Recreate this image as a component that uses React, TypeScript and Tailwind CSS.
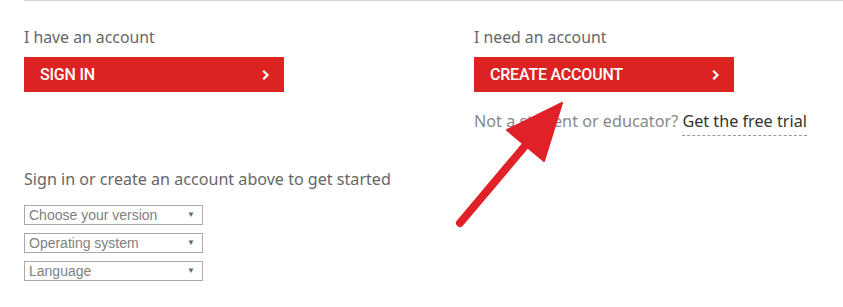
import React from "react";

const Chevron = () => (
  <svg width="8" height="10" viewBox="0 0 8 10" className="block">
    <path d="M2 1.5 L5.5 5 L2 8.5" fill="none" stroke="#fff" strokeWidth="2.2" strokeLinecap="square" />
  </svg>
);

const RedButton = ({ label }: { label: string }) => (
  <div className="w-[260px] h-[35px] bg-[#dd2222] flex items-center justify-between pl-[16px] pr-[14px] text-white text-[16px] font-medium tracking-[-0.2px] font-['Roboto',sans-serif]">
    <span>{label}</span>
    <Chevron />
  </div>
);

const Select = ({ label }: { label: string }) => (
  <div className="w-[179px] h-[20px] border border-[#a9a9a9] flex items-center justify-between pl-[4px] pr-[7px] text-[14px] text-[#808080] font-['Liberation_Sans',Arial,sans-serif] leading-none">
    <span>{label}</span>
    <span className="text-[8px] text-[#666]">▼</span>
  </div>
);

export default function App() {
  return (
    <div className="relative w-[843px] h-[307px] bg-white overflow-hidden font-['Noto_Sans',sans-serif]">
      <div className="ml-[24px] h-px bg-[#d6d6d6]" />
      <div className="flex pl-[24px] pt-[26px]">
        <div className="w-[450px] flex flex-col">
          <div className="text-[15.8px] text-[#666] leading-[20px] mb-[10px]">I have an account</div>
          <RedButton label="SIGN IN" />
          <div className="mt-[77px] text-[16.1px] text-[#666] leading-[20px]">
            Sign in or create an account above to get started
          </div>
          <div className="mt-[16px] flex flex-col gap-[8px]">
            <Select label="Choose your version" />
            <Select label="Operating system" />
            <Select label="Language" />
          </div>
        </div>
        <div className="flex flex-col">
          <div className="text-[15.8px] text-[#666] leading-[20px] mb-[10px]">I need an account</div>
          <RedButton label="CREATE ACCOUNT" />
          <div className="mt-[19px] text-[16.2px] leading-[20px] text-[#888]">
            Not a student or educator?{" "}
            <span className="text-[#333] border-b border-dashed border-[#999] pb-[3px]">Get the free trial</span>
          </div>
        </div>
      </div>
      <svg className="absolute left-0 top-0 pointer-events-none" width="843" height="307" viewBox="0 0 843 307">
        <line x1="460" y1="223" x2="530" y2="140" stroke="#e02128" strokeWidth="8" strokeLinecap="round" />
        <polygon points="562,103 507,130 544,161" fill="#e02128" stroke="#e02128" strokeWidth="2" strokeLinejoin="round" />
      </svg>
    </div>
  );
}
